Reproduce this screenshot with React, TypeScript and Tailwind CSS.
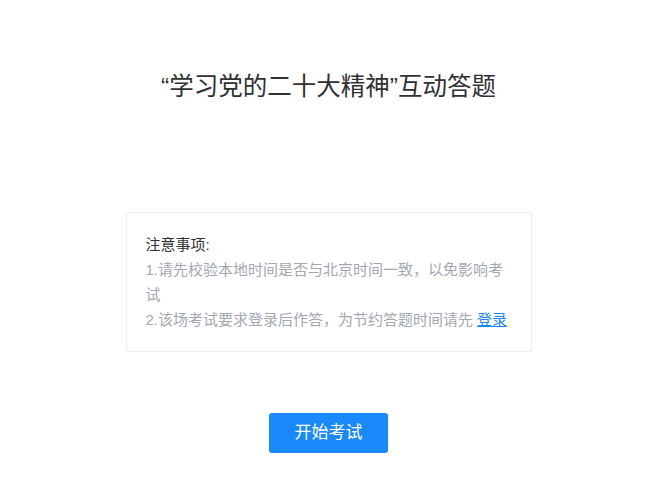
export default function App() {
	return (
		<div
			className="min-h-screen bg-white flex flex-col items-center pr-[15px]"
			style={{ fontFamily: '"Liberation Sans", "Noto Sans CJK SC", sans-serif' }}
		>
			<h1 className="mt-[71px] text-[24.5px] leading-[32px] font-normal text-[#303133]">
				“学习党的二十大精神”互动答题
			</h1>

			<div className="mt-[109px] w-[406px] border border-[#ebeef5] px-[19px] pt-[19px] pb-[19px] text-[15px] leading-[25px]">
				<p className="text-[#303133]">注意事项:</p>
				<p className="text-[#a3a7b0]">1.请先校验本地时间是否与北京时间一致，以免影响考试</p>
				<p className="text-[#a3a7b0]">
					2.该场考试要求登录后作答，为节约答题时间请先
					<a href="#" className="ml-[4px] text-[#1989fa] underline">
						登录
					</a>
				</p>
			</div>

			<button className="mt-[61px] w-[119px] h-[40px] rounded-[3px] bg-[#1989fa] text-white text-[17px]">
				开始考试
			</button>
		</div>
	);
}
